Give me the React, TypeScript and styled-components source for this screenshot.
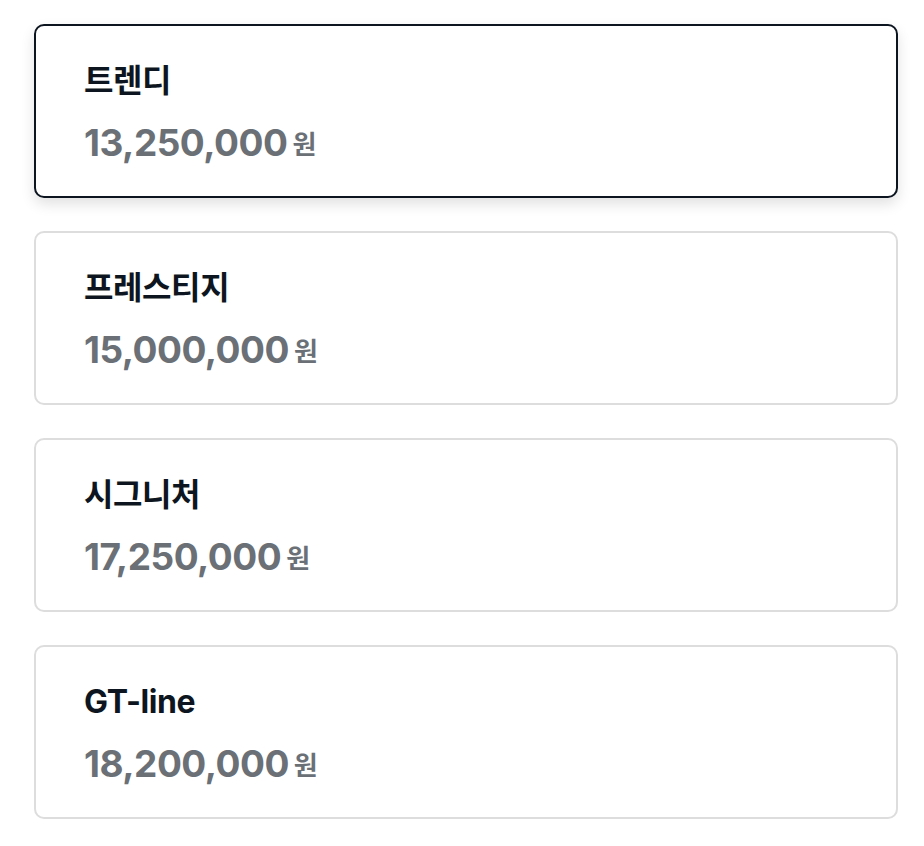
import React, { useState } from "react";
import styled, { createGlobalStyle } from "styled-components";

const GlobalStyle = createGlobalStyle`
  html, body {
    margin: 0;
    padding: 0;
    background: #ffffff;
    font-family: "Inter", "Noto Sans CJK KR", sans-serif;
  }
`;

const trims = [
  { key: "trendy", name: "트렌디", price: 13250000 },
  { key: "prestige", name: "프레스티지", price: 15000000 },
  { key: "signature", name: "시그니처", price: 17250000 },
  { key: "gtline", name: "GT-line", price: 18200000 },
];

const App = (): JSX.Element => {
  const [selected, setSelected] = useState("trendy");

  return (
    <>
      <GlobalStyle />
      <Wrapper>
        {trims.map((t) => (
          <Card
            key={t.key}
            $active={selected === t.key}
            onClick={() => setSelected(t.key)}
          >
            <Title>{t.name}</Title>
            <Price>
              {t.price.toLocaleString("en-US")}
              <Unit>원</Unit>
            </Price>
          </Card>
        ))}
      </Wrapper>
    </>
  );
};

export default App;

const Wrapper = styled.div`
  display: flex;
  flex-direction: column;
  gap: 33px;
  padding: 24px 26px 24px 34px;
`;

const Card = styled.div<{ $active: boolean }>`
  box-sizing: border-box;
  height: 174px;
  padding: 33px 48px 0;
  border-radius: 10px;
  border: 2px solid ${(p) => (p.$active ? "#0d1620" : "#dddddd")};
  background: #ffffff;
  box-shadow: ${(p) =>
    p.$active ? "0 6px 14px rgba(0, 0, 0, 0.12)" : "none"};
  cursor: pointer;
`;

const Title = styled.div`
  font-family: "Inter", "Noto Sans CJK KR", sans-serif;
  font-size: 32px;
  font-weight: 700;
  line-height: 44px;
  color: #0d1620;
  letter-spacing: -0.4px;
`;

const Price = styled.div`
  margin-top: 16px;
  font-family: "Inter", "Noto Sans CJK KR", sans-serif;
  font-size: 37px;
  font-weight: 700;
  line-height: 48px;
  color: #6a7076;
  letter-spacing: -0.5px;
`;

const Unit = styled.span`
  position: relative;
  top: -2px;
  margin-left: 5px;
  font-size: 26px;
  font-weight: 700;
`;
